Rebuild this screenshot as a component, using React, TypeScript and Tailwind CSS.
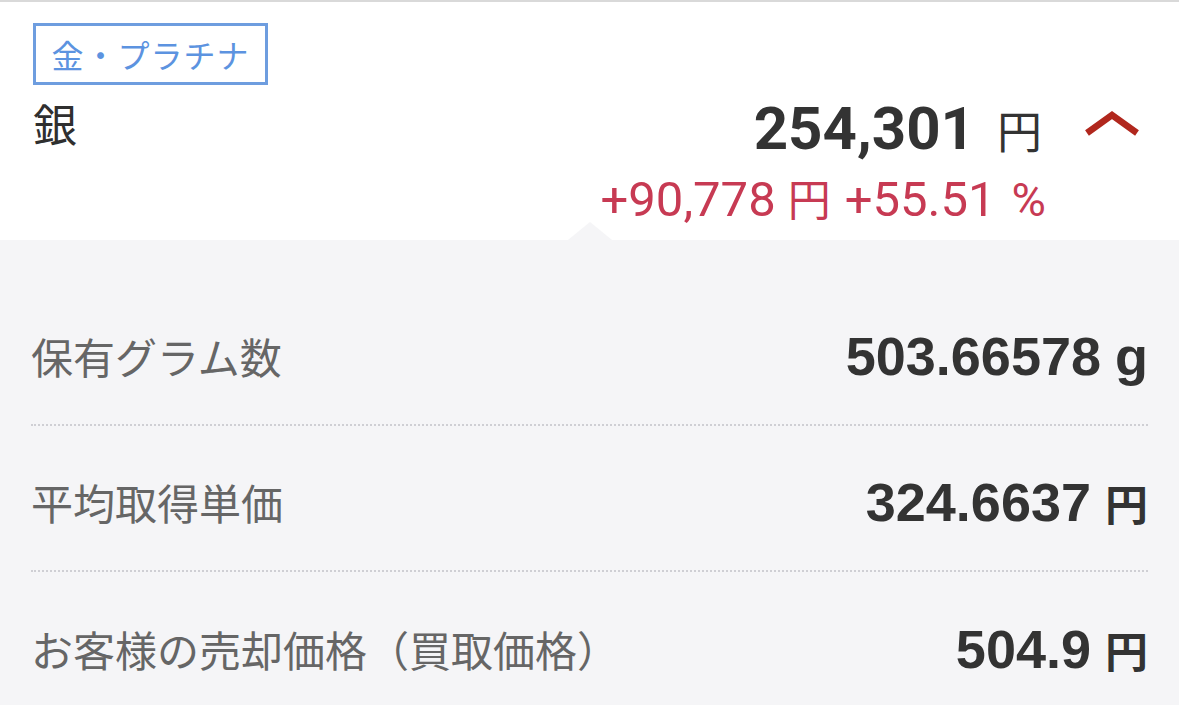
import React from "react";

const JP = { fontFamily: '"Noto Sans CJK JP", sans-serif' };

function Row({ label, value, unit, last }: { label: string; value: string; unit: string; last?: boolean }) {
  return (
    <div
      className={`flex items-center justify-between h-[146px] pt-[8px] ${last ? "" : "border-b-2 border-dotted border-[#cfcfd4]"}`}
    >
      <div className="text-[42px] text-[#666666] leading-none" style={JP}>
        {label}
      </div>
      <div className="flex items-baseline text-[#333333] leading-none">
        <span className="text-[54px] font-bold font-['Liberation_Sans',Arial,sans-serif]">{value}</span>
        <span
          className={`ml-[14px] font-bold ${unit === "g" ? "text-[54px] font-['Liberation_Sans',Arial,sans-serif]" : "text-[43px]"}`}
          style={unit === "g" ? undefined : JP}
        >
          {unit}
        </span>
      </div>
    </div>
  );
}

export default function App() {
  return (
    <div className="w-[1179px] h-[705px] bg-[#f5f5f7] overflow-hidden">
      <div className="h-[2px] bg-[#d9d9d9]" />
      <div className="relative bg-white h-[238px] pl-[33px] pr-[39px] pt-[21px]">
        <div
          className="flex items-center justify-center h-[62px] w-[235px] border-[3px] border-[#6e9ddf] text-[#5c93e0] text-[32px] leading-none tracking-[1px]"
          style={JP}
        >
          金・プラチナ
        </div>
        <div className="flex justify-between items-start mt-[14px]">
          <div className="text-[44px] leading-none text-[#2f2f2f] mt-[2px]" style={JP}>
            銀
          </div>
          <div className="flex items-start">
            <div className="flex flex-col items-end">
              <div className="flex items-baseline text-[#333333] leading-none">
                <span className="text-[60px] font-bold font-['Roboto',Arial,sans-serif]">254,301</span>
                <span className="ml-[22px] text-[45px]" style={JP}>円</span>
              </div>
              <div className="flex items-baseline text-[#c73a53] leading-none mt-[16px] mr-[-4px]">
                <span className="text-[49px] font-['Roboto',Arial,sans-serif]">+90,778</span>
                <span className="ml-[12px] text-[43px]" style={JP}>円</span>
                <span className="ml-[14px] text-[49px] font-['Roboto',Arial,sans-serif]">+55.51</span>
                <span className="ml-[16px] text-[47px] font-['Roboto',Arial,sans-serif]">%</span>
              </div>
            </div>
            <svg width="56" height="26" viewBox="0 0 56 26" className="ml-[42px] mt-[11px]">
              <polyline points="3,23 28,5 53,23" fill="none" stroke="#b1271d" strokeWidth="6.5" strokeLinejoin="miter" />
            </svg>
          </div>
        </div>
        <div className="absolute bottom-0 left-[568px] w-0 h-0 border-l-[22px] border-r-[22px] border-b-[18px] border-l-transparent border-r-transparent border-b-[#f5f5f7]" />
      </div>
      <div className="px-[31px] pt-[40px]">
        <Row label="保有グラム数" value="503.66578" unit="g" />
        <Row label="平均取得単価" value="324.6637" unit="円" />
        <Row label="お客様の売却価格（買取価格）" value="504.9" unit="円" last />
      </div>
    </div>
  );
}
